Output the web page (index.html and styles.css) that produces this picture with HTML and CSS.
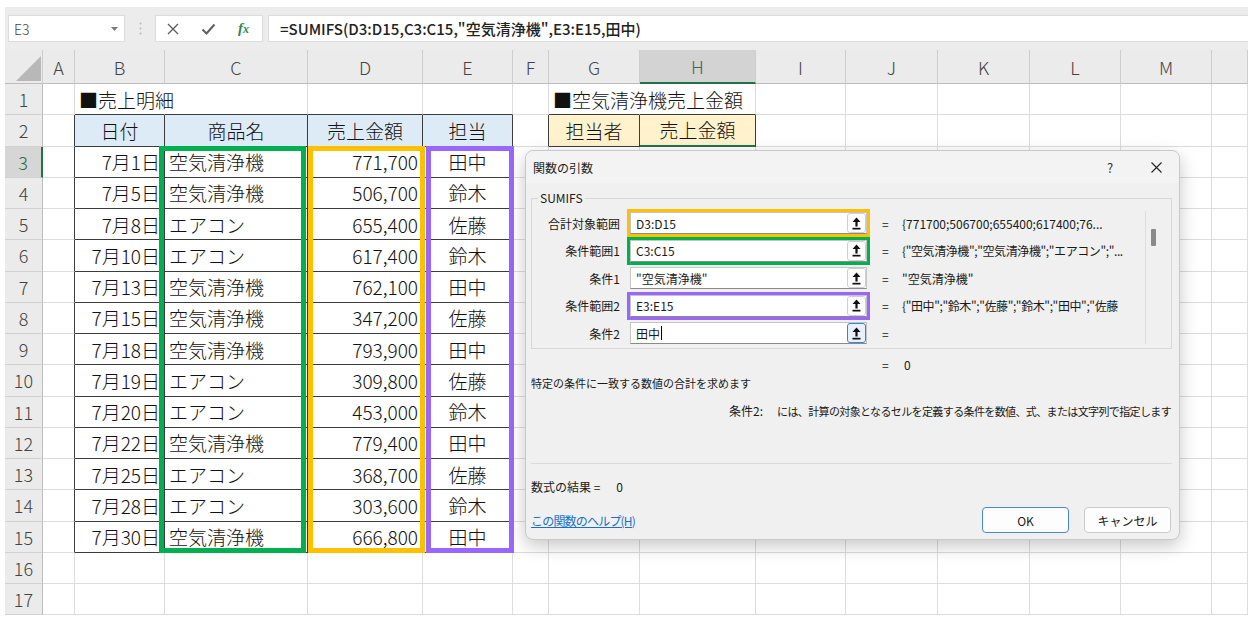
FILE: index.html
```html
<!DOCTYPE html>
<html lang="ja">
<head>
<meta charset="utf-8">
<title>SUMIFS</title>
<link rel="stylesheet" href="styles.css">
</head>
<body>
<div class="app">
  <div class="toolbar">
    <div class="namebox"><span>E3</span><svg class="caret-ico" width="7" height="4" viewBox="0 0 7 4"><polygon points="0,0 7,0 3.5,4" fill="#7a7a7a"/></svg></div>
    <div class="grip"><svg width="3" height="13" viewBox="0 0 3 13"><circle cx="1.5" cy="1.5" r="1" fill="#b8b8b8"/><circle cx="1.5" cy="6.5" r="1" fill="#b8b8b8"/><circle cx="1.5" cy="11.5" r="1" fill="#b8b8b8"/></svg></div>
    <div class="fxbtns">
      <svg class="ico" width="12" height="12" viewBox="0 0 12 12"><path d="M1 1L11 11M11 1L1 11" stroke="#5e5e5e" stroke-width="1.4" fill="none"/></svg>
      <svg class="ico" width="15" height="12" viewBox="0 0 15 12"><path d="M1.5 6.5L5.5 10.5L13.5 1.5" stroke="#5e5e5e" stroke-width="2" fill="none"/></svg>
      <span class="fx"><i>f</i><i class="fxx">x</i></span>
    </div>
    <div class="formula">=SUMIFS(D3:D15,C3:C15,"空気清浄機",E3:E15,田中)</div>
  </div>

  <div class="colhdr">
    <div class="corner"><span class="tri"></span></div>
    <div>A</div><div>B</div><div>C</div><div>D</div><div>E</div><div>F</div><div>G</div><div class="sel">H</div><div>I</div><div>J</div><div>K</div><div>L</div><div>M</div><div></div>
  </div>

  <div class="grid">
    <div class="rh">1</div><div></div><div class="tb nr l">■売上明細</div><div class="tb"></div><div class="tb"></div><div class="tb"></div><div></div><div class="tb nr l">■空気清浄機売上金額</div><div class="tb"></div><div></div><div></div><div></div><div></div><div></div><div></div>
    <div class="rh">2</div><div class="tr"></div><div class="t hd">日付</div><div class="t hd">商品名</div><div class="t hd">売上金額</div><div class="t hd">担当</div><div class="tr"></div><div class="t ho">担当者</div><div class="t ho act-top">売上金額</div><div></div><div></div><div></div><div></div><div></div><div></div>
    <div class="rh act">3</div><div class="tr"></div><div class="t r">7月1日</div><div class="t l">空気清浄機</div><div class="t r">771,700</div><div class="t c">田中</div><div></div><div></div><div></div><div></div><div></div><div></div><div></div><div></div><div></div>
    <div class="rh">4</div><div class="tr"></div><div class="t r">7月5日</div><div class="t l">空気清浄機</div><div class="t r">506,700</div><div class="t c">鈴木</div><div></div><div></div><div></div><div></div><div></div><div></div><div></div><div></div><div></div>
    <div class="rh">5</div><div class="tr"></div><div class="t r">7月8日</div><div class="t l">エアコン</div><div class="t r">655,400</div><div class="t c">佐藤</div><div></div><div></div><div></div><div></div><div></div><div></div><div></div><div></div><div></div>
    <div class="rh">6</div><div class="tr"></div><div class="t r">7月10日</div><div class="t l">エアコン</div><div class="t r">617,400</div><div class="t c">鈴木</div><div></div><div></div><div></div><div></div><div></div><div></div><div></div><div></div><div></div>
    <div class="rh">7</div><div class="tr"></div><div class="t r">7月13日</div><div class="t l">空気清浄機</div><div class="t r">762,100</div><div class="t c">田中</div><div></div><div></div><div></div><div></div><div></div><div></div><div></div><div></div><div></div>
    <div class="rh">8</div><div class="tr"></div><div class="t r">7月15日</div><div class="t l">空気清浄機</div><div class="t r">347,200</div><div class="t c">佐藤</div><div></div><div></div><div></div><div></div><div></div><div></div><div></div><div></div><div></div>
    <div class="rh">9</div><div class="tr"></div><div class="t r">7月18日</div><div class="t l">空気清浄機</div><div class="t r">793,900</div><div class="t c">田中</div><div></div><div></div><div></div><div></div><div></div><div></div><div></div><div></div><div></div>
    <div class="rh">10</div><div class="tr"></div><div class="t r">7月19日</div><div class="t l">エアコン</div><div class="t r">309,800</div><div class="t c">佐藤</div><div></div><div></div><div></div><div></div><div></div><div></div><div></div><div></div><div></div>
    <div class="rh">11</div><div class="tr"></div><div class="t r">7月20日</div><div class="t l">エアコン</div><div class="t r">453,000</div><div class="t c">鈴木</div><div></div><div></div><div></div><div></div><div></div><div></div><div></div><div></div><div></div>
    <div class="rh">12</div><div class="tr"></div><div class="t r">7月22日</div><div class="t l">空気清浄機</div><div class="t r">779,400</div><div class="t c">田中</div><div></div><div></div><div></div><div></div><div></div><div></div><div></div><div></div><div></div>
    <div class="rh">13</div><div class="tr"></div><div class="t r">7月25日</div><div class="t l">エアコン</div><div class="t r">368,700</div><div class="t c">佐藤</div><div></div><div></div><div></div><div></div><div></div><div></div><div></div><div></div><div></div>
    <div class="rh">14</div><div class="tr"></div><div class="t r">7月28日</div><div class="t l">エアコン</div><div class="t r">303,600</div><div class="t c">鈴木</div><div></div><div></div><div></div><div></div><div></div><div></div><div></div><div></div><div></div>
    <div class="rh">15</div><div class="tr"></div><div class="t r">7月30日</div><div class="t l">空気清浄機</div><div class="t r">666,800</div><div class="t c">田中</div><div></div><div></div><div></div><div></div><div></div><div></div><div></div><div></div><div></div>
    <div class="rh">16</div><div></div><div></div><div></div><div></div><div></div><div></div><div></div><div></div><div></div><div></div><div></div><div></div><div></div><div></div>
    <div class="rh">17</div><div></div><div></div><div></div><div></div><div></div><div></div><div></div><div></div><div></div><div></div><div></div><div></div><div></div><div></div>
  </div>

  <div class="hl hl-green"></div>
  <div class="hl hl-orange"></div>
  <div class="hl hl-purple"></div>

  <div class="dialog">
    <div class="dlg-title">
      <span class="dlg-name">関数の引数</span>
      <span class="dlg-q">?</span>
      <span class="dlg-x"><svg width="11" height="11" viewBox="0 0 11 11"><path d="M0.5 0.5L10.5 10.5M10.5 0.5L0.5 10.5" stroke="#222" stroke-width="1.1" fill="none"/></svg></span>
    </div>
    <fieldset class="group">
      <legend>SUMIFS</legend>
      <div class="group-body">
        <div class="fields">
          <div class="arg">
            <span class="lbl">合計対象範囲</span>
            <div class="inp ol-orange"><span class="val">D3:D15</span><span class="refbtn"><svg width="9" height="13" viewBox="0 0 9 13"><path d="M4.5 0.5L8.5 5H5.6V9.5H3.4V5H0.5Z" fill="#111"/><rect x="0.5" y="10.8" width="8" height="1.7" fill="#111"/></svg></span></div>
            <span class="eq">=</span><span class="res">{771700;506700;655400;617400;76...</span>
          </div>
          <div class="arg">
            <span class="lbl">条件範囲1</span>
            <div class="inp ol-green"><span class="val">C3:C15</span><span class="refbtn"><svg width="9" height="13" viewBox="0 0 9 13"><path d="M4.5 0.5L8.5 5H5.6V9.5H3.4V5H0.5Z" fill="#111"/><rect x="0.5" y="10.8" width="8" height="1.7" fill="#111"/></svg></span></div>
            <span class="eq">=</span><span class="res narrow">{"空気清浄機";"空気清浄機";"エアコン";"...</span>
          </div>
          <div class="arg">
            <span class="lbl">条件1</span>
            <div class="inp"><span class="val">"空気清浄機"</span><span class="refbtn"><svg width="9" height="13" viewBox="0 0 9 13"><path d="M4.5 0.5L8.5 5H5.6V9.5H3.4V5H0.5Z" fill="#111"/><rect x="0.5" y="10.8" width="8" height="1.7" fill="#111"/></svg></span></div>
            <span class="eq">=</span><span class="res">"空気清浄機"</span>
          </div>
          <div class="arg">
            <span class="lbl">条件範囲2</span>
            <div class="inp ol-purple"><span class="val">E3:E15</span><span class="refbtn"><svg width="9" height="13" viewBox="0 0 9 13"><path d="M4.5 0.5L8.5 5H5.6V9.5H3.4V5H0.5Z" fill="#111"/><rect x="0.5" y="10.8" width="8" height="1.7" fill="#111"/></svg></span></div>
            <span class="eq">=</span><span class="res narrow">{"田中";"鈴木";"佐藤";"鈴木";"田中";"佐藤</span>
          </div>
          <div class="arg">
            <span class="lbl">条件2</span>
            <div class="inp"><span class="val">田中<span class="cursor"></span></span><span class="refbtn focus"><svg width="9" height="13" viewBox="0 0 9 13"><path d="M4.5 0.5L8.5 5H5.6V9.5H3.4V5H0.5Z" fill="#111"/><rect x="0.5" y="10.8" width="8" height="1.7" fill="#111"/></svg></span></div>
            <span class="eq">=</span><span class="res"></span>
          </div>
        </div>
        <div class="vscroll"><div class="thumb"></div></div>
      </div>
    </fieldset>
    <div class="total"><span class="eq2">=</span><span>0</span></div>
    <div class="desc">特定の条件に一致する数値の合計を求めます</div>
    <div class="argdesc"><span class="argname">条件2:</span><span class="argtext">には、計算の対象となるセルを定義する条件を数値、式、または文字列で指定します</span></div>
    <div class="sep"></div>
    <div class="fresult"><span>数式の結果 =</span><span class="fval">0</span></div>
    <div class="footer">
      <span class="help">この関数のヘルプ(H)</span>
      <span class="btn ok">OK</span>
      <span class="btn">キャンセル</span>
    </div>
  </div>
</div>
</body>
</html>
```

FILE: styles.css
```css
* { box-sizing: border-box; margin: 0; padding: 0; }

body {
  background: #fff;
  font-family: "Noto Sans CJK JP", "Noto Sans", sans-serif;
  color: #1a1a1a;
}

.app {
  position: relative;
  width: 1256px;
  height: 621px;
  padding: 7px 8px 0 5px;
  overflow: hidden;
  --cols: 38px 32px 90px 143px 115px 90px 36px 91px 116px 90px 92px 92px 91px 91px 36px;
}

/* formula bar */
.toolbar {
  height: 43px;
  background: #ececec;
  display: flex;
  align-items: flex-start;
  padding: 8px 0 0 3px;
}
.namebox {
  width: 117px;
  height: 27px;
  background: #fff;
  border: 1px solid #dcdcdc;
  display: flex;
  align-items: center;
  justify-content: space-between;
  padding: 0 6px 0 5px;
  font-size: 14px;
  font-weight: 300;
  color: #444;
}
.grip {
  width: 30px;
  height: 27px;
  display: flex;
  align-items: center;
  justify-content: center;
}
.fxbtns {
  width: 108px;
  height: 27px;
  background: #fff;
  border: 1px solid #dcdcdc;
  display: flex;
  align-items: center;
  padding-left: 11px;
  gap: 22px;
}
.fx {
  font-family: "Liberation Serif", serif;
  font-size: 15px;
  color: #2b8a4f;
  font-weight: bold;
}
.fx .fxx { font-size: 12px; }
.formula {
  flex: 1;
  height: 27px;
  margin-left: 5px;
  background: #fff;
  border: 1px solid #dcdcdc;
  border-right: none;
  display: flex;
  align-items: center;
  padding-left: 11px;
  font-size: 15px;
  font-weight: 500;
  color: #222;
  white-space: nowrap;
}

/* column headers */
.colhdr {
  display: grid;
  grid-template-columns: var(--cols);
  height: 34px;
  background: #ebebeb;
}
.colhdr > div {
  border-right: 1px solid #cdcdcd;
  border-bottom: 1px solid #bdbdbd;
  display: flex;
  align-items: center;
  justify-content: center;
  font-size: 18px;
  font-weight: 300;
  color: #444;
}
.colhdr > .corner {
  align-items: flex-end;
  justify-content: flex-end;
  padding: 0 1px 2px 0;
}
.tri {
  width: 0;
  height: 0;
  border-left: 25px solid transparent;
  border-bottom: 25px solid #b8b8b8;
}
.colhdr > .sel {
  background: #d3d3d3;
  color: #3d6b50;
  border-bottom: 2px solid #217346;
}

/* cell grid */
.grid {
  display: grid;
  grid-template-columns: var(--cols);
  grid-auto-rows: 31.25px;
  background: #fff;
}
.grid > div {
  border-right: 1px solid #dcdcdc;
  border-bottom: 1px solid #dcdcdc;
  display: flex;
  align-items: center;
  font-size: 19px;
  font-weight: 300;
  white-space: nowrap;
  color: #111;
  min-width: 0;
}
.grid > .rh {
  background: #ebebeb;
  border-right-color: #bdbdbd;
  border-bottom-color: #d0d0d0;
  justify-content: center;
  font-size: 18px;
  color: #444;
}
.grid > .act {
  background: #d6d6d6;
  color: #2c6e47;
  border-right: 2px solid #217346;
}
.grid > .t { border-right-color: #3c3c3c; border-bottom-color: #3c3c3c; }
.grid > .tr { border-right-color: #3c3c3c; }
.grid > .tb { border-bottom-color: #3c3c3c; }
.grid > .nr { border-right-color: transparent; }
.grid > .hd { background: #ddebf7; justify-content: center; }
.grid > .ho { background: #fff2cc; justify-content: center; }
.grid > .act-top { border-bottom: 2px solid #217346; }
.grid > .r { justify-content: flex-end; padding-right: 4px; }
.grid > .l { padding-left: 4px; }
.grid > .c { justify-content: center; }

/* highlight frames */
.hl {
  position: absolute;
  top: 146px;
  height: 407px;
  border: 5px solid;
}
.hl-green { left: 159px; width: 147px; border-color: #00b050; }
.hl-orange { left: 308px; width: 117px; border-color: #ffc000; }
.hl-purple { left: 426px; width: 88px; border-color: #9966ff; }

/* dialog */
.dialog {
  position: absolute;
  left: 525px;
  top: 150px;
  width: 655px;
  height: 390px;
  background: #f0f0f0;
  border: 1px solid #c9c9c9;
  border-radius: 8px;
  box-shadow: 0 6px 18px rgba(0, 0, 0, 0.22);
  font-size: 12px;
  color: #1a1a1a;
}
.dlg-title {
  height: 32px;
  display: flex;
  align-items: center;
  padding-left: 7px;
  background: #f3f3f3;
  border-radius: 8px 8px 0 0;
}
.dlg-name { flex: 1; }
.dlg-q, .dlg-x {
  width: 46px;
  display: flex;
  justify-content: center;
  align-items: center;
}
.dlg-q { font-size: 13px; color: #333; }

.group {
  margin: 7px 7px 0 5px;
  padding: 0;
  border: 1px solid #d8d8d8;
  min-width: 0;
}
.group legend {
  margin-left: 6px;
  padding: 0 2px;
  font-size: 12px;
  line-height: 16px;
}
.group-body {
  height: 142px;
  display: flex;
}
.fields {
  flex: 1;
  padding-top: 6px;
}
.arg {
  display: flex;
  align-items: center;
  height: 22px;
  margin-bottom: 5.5px;
  white-space: nowrap;
}
.lbl {
  width: 88px;
  flex-shrink: 0;
  text-align: right;
}
.inp {
  width: 237px;
  flex-shrink: 0;
  height: 22px;
  margin-left: 10px;
  background: #fff;
  border: 1px solid #c4c4c4;
  border-bottom-color: #8a8a8a;
  display: flex;
  align-items: center;
  padding-left: 5px;
}
.ol-orange { outline: 3px solid #ffc000; }
.ol-green { outline: 3px solid #00b050; }
.ol-purple { outline: 3px solid #9966ff; }
.val {
  flex: 1;
  display: flex;
  align-items: center;
}
.cursor {
  display: inline-block;
  width: 1px;
  height: 14px;
  background: #000;
  margin-left: 1px;
}
.refbtn {
  width: 19px;
  height: 20px;
  border: 1px solid #cfcfcf;
  border-radius: 3px;
  background: #fdfdfd;
  display: flex;
  align-items: center;
  justify-content: center;
}
.refbtn.focus {
  border-color: #3b82d0;
  background: #e8f1fb;
}
.eq { margin-left: 15px; width: 20px; flex-shrink: 0; }
.res { white-space: nowrap; }
.res.narrow { letter-spacing: -0.4px; }
.vscroll {
  width: 26px;
  margin-top: 5px;
  height: 133px;
  border-left: 1px solid #dedede;
  padding: 18px 0 0 5px;
}
.thumb {
  width: 5px;
  height: 17px;
  background: #8a8a8a;
  border-radius: 1px;
}

.total {
  margin-top: 8px;
  height: 16px;
  line-height: 16px;
  padding-left: 356px;
  display: flex;
}
.eq2 { width: 22px; }
.desc {
  margin-top: 2px;
  height: 16px;
  line-height: 16px;
  padding-left: 5px;
  font-size: 11px;
}
.argdesc {
  margin-top: 12px;
  height: 16px;
  line-height: 16px;
  padding-left: 203px;
  display: flex;
  white-space: nowrap;
}
.argname { width: 48px; flex-shrink: 0; font-size: 12px; }
.argtext { font-size: 11px; letter-spacing: -0.62px; }
.sep {
  margin: 44px 7px 0 5px;
  border-top: 1px solid #dadada;
}
.fresult {
  margin-top: 15px;
  height: 16px;
  line-height: 16px;
  padding-left: 5px;
  display: flex;
}
.fval { margin-left: 16px; }
.footer {
  margin-top: 12px;
  display: flex;
  align-items: center;
  height: 26px;
  padding: 0 8px 0 5px;
}
.help {
  flex: 1;
  color: #1a6fc9;
  text-decoration: underline;
  letter-spacing: -0.8px;
}
.btn {
  width: 87px;
  height: 26px;
  border: 1px solid #cbcbcb;
  border-radius: 4px;
  background: #fdfdfd;
  display: flex;
  align-items: center;
  justify-content: center;
  margin-left: 15px;
}
.btn.ok { border-color: #4a86cf; }
```
